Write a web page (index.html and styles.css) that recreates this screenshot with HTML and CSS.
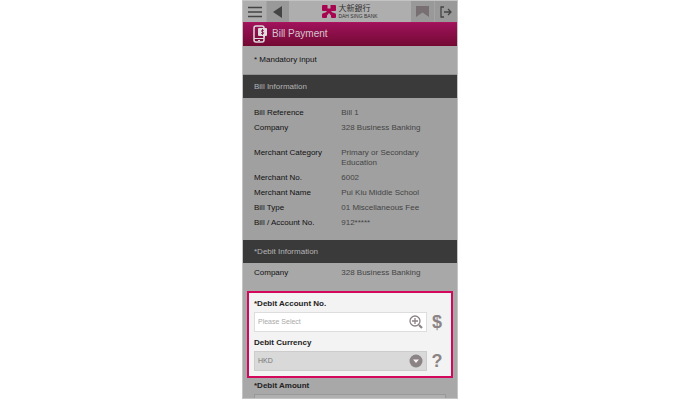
FILE: index.html
```html
<!DOCTYPE html>
<html lang="en">
<head>
    <meta charset="UTF-8">
    <meta name="viewport" content="width=device-width, initial-scale=1.0">
    <title>Bill Payment</title>
    <link rel="stylesheet" href="styles.css">
</head>
<body>

<main class="phone">
    <header class="topbar">
        <button class="bar_button" type="button" aria-label="Menu">
            <svg width="14" height="12" viewBox="0 0 14 12"><path d="M0 1.5h14M0 6h14M0 10.5h14" stroke="#444" stroke-width="1.5"/></svg>
        </button>
        <button class="bar_button shaded" type="button" aria-label="Back">
            <svg width="10" height="12" viewBox="0 0 10 12"><path d="M9 0v12L0 6z" fill="#444"/></svg>
        </button>
        <div class="brand">
            <svg width="14" height="13" viewBox="0 0 14 13">
                <path d="M1 0H5.500V3.500h3V0H13q1 0 1 1V5q0 1-1 1H9Q9.500 7.500 12 8 14 8.300 14 9.500V12Q14 13 13 13H10Q9 13 9 12V10.500L7 8 5 10.500V12Q5 13 4 13H1Q0 13 0 12V9.500Q0 8.300 2 8 4.500 7.500 5 6H1Q0 6 0 5V1Q0 0 1 0z" fill="#a80550"/>
            </svg>
            <div class="brand_text">
                <div class="brand_zh" lang="zh-Hant">大新銀行</div>
                <div class="brand_en">DAH SING BANK</div>
            </div>
        </div>
        <button class="bar_button shaded" type="button" aria-label="Bookmarks">
            <svg width="13" height="11" viewBox="0 0 13 11"><path d="M0 0h13v11L6.500 6.500 0 11z" fill="#776f71"/></svg>
        </button>
        <button class="bar_button shaded" type="button" aria-label="Log out">
            <svg width="12" height="12" viewBox="0 0 12 12" fill="none" stroke="#444" stroke-width="1.300"><path d="M4 1H1v10h3M4 6h7M8 3l3 3-3 3"/></svg>
        </button>
    </header>

    <div class="title">
        <svg width="14" height="18" viewBox="0 0 14 18" fill="none" stroke="#ddd">
            <rect x="1" y="1" width="10" height="16" rx="2" stroke-width="1.500"/>
            <path d="M1 13.500h10M5 15.500h2"/>
            <path d="M6 3h7q1 0 1 1v6q0 1-1 1h-1v2l-2-2H6q-1 0-1-1V4q0-1 1-1z" fill="#ddd" stroke="none"/>
            <path d="M11 5.500Q8.500 4.500 8.200 6 8.500 6.800 9.700 7 11.200 7.500 10.500 8.500 9 9.200 8 8.300M9.500 4v6" stroke="#850443" stroke-width=".8"/>
        </svg>
        <h1>Bill Payment</h1>
    </div>

    <p class="note">* Mandatory input</p>

    <h2 class="section_title">Bill Information</h2>
    <dl class="details">
        <div class="row"><dt>Bill Reference</dt><dd>Bill 1</dd></div>
        <div class="row tall"><dt>Company</dt><dd>328 Business Banking</dd></div>
        <div class="row"><dt>Merchant Category</dt><dd>Primary or Secondary Education</dd></div>
        <div class="row"><dt>Merchant No.</dt><dd>6002</dd></div>
        <div class="row"><dt>Merchant Name</dt><dd>Pui Kiu Middle School</dd></div>
        <div class="row"><dt>Bill Type</dt><dd>01 Miscellaneous Fee</dd></div>
        <div class="row"><dt>Bill / Account No.</dt><dd>912*****</dd></div>
    </dl>

    <h2 class="section_title">*Debit Information</h2>
    <dl class="details compact">
        <div class="row"><dt>Company</dt><dd>328 Business Banking</dd></div>
    </dl>

    <form class="debit">
        <div class="highlight">
            <label for="account">*Debit Account No.</label>
            <div class="field">
                <div class="control">
                    <input id="account" type="text" placeholder="Please Select">
                    <svg width="14" height="14" viewBox="0 0 14 14" fill="none" stroke="#8c8385" stroke-width="1.300"><circle cx="6" cy="6" r="5"/><path d="M3 6h6M6 3v6"/><path d="M10 10l3 3" stroke-width="2.200"/></svg>
                </div>
                <span class="symbol">$</span>
            </div>
            <label for="currency">Debit Currency</label>
            <div class="field">
                <div class="control disabled">
                    <select id="currency"><option>HKD</option></select>
                    <svg width="14" height="14" viewBox="0 0 14 14"><circle cx="7" cy="7" r="6.500" fill="#8c8385"/><path d="M4 5.500h6L7 9z" fill="#f4f4f4"/></svg>
                </div>
                <button class="symbol" type="button" aria-label="Currency help">?</button>
            </div>
        </div>
        <div class="amount">
            <label for="amount">*Debit Amount</label>
            <input id="amount" type="text">
        </div>
    </form>
</main>

</body>
</html>
```
FILE: styles.css
```css
* {
    box-sizing: border-box;
}

body {
    margin: 0;
    background: #fff;
    font-family: "Liberation Sans", Arial, sans-serif;
    font-size: 8px;
    line-height: 10px;
    color: #111;
}

h1, h2, p, dl, dd {
    margin: 0;
    font-weight: normal;
}

svg {
    display: block;
    flex: none;
}

button {
    border: 0;
    padding: 0;
    background: none;
    font: inherit;
}

.phone {
    width: 100%;
    max-width: 216px;
    margin: 0 auto;
    border: 1px solid #c4c4c4;
    background: #a8a8a8;
    overflow: hidden;
}

.topbar {
    display: flex;
    height: 21px;
    background: #aeaeae;
}

.bar_button {
    display: flex;
    align-items: center;
    justify-content: center;
    width: 23px;
}

.bar_button.shaded {
    background: #999;
}

.bar_button + .bar_button {
    border-left: 1px solid #a4a4a4;
}

.brand {
    flex: 1;
    display: flex;
    align-items: center;
    justify-content: center;
    gap: 2px;
}

.brand_text {
    color: #333;
}

.brand_zh {
    font-family: "Liberation Sans", "Noto Sans CJK TC", sans-serif;
    font-size: 8px;
    line-height: 8px;
}

.brand_en {
    font-size: 5px;
    line-height: 6px;
    white-space: nowrap;
}

.title {
    display: flex;
    align-items: center;
    gap: 5px;
    height: 24px;
    padding: 0 10px;
    border-top: 1px solid #ad1460;
    border-bottom: 1px solid #740831;
    background: linear-gradient(#9f125b, #750a35);
    color: #d5c5cc;
}

.title h1 {
    font-size: 10px;
    line-height: 14px;
}

.note {
    padding: 9px 11px 9px;
    border-bottom: 1px solid #919191;
}

.section_title {
    padding: 7px 11px 6px;
    background: #3a3a3a;
    font-size: 8px;
    color: #b4b4b4;
}

.details {
    display: flex;
    flex-direction: column;
    gap: 5px;
    padding: 10px 11px 12px;
    background: #a0a0a0;
}

.details.compact {
    padding: 5px 11px 13px;
    background: #a8a8a8;
}

.row {
    display: grid;
    grid-template-columns: 5fr 6fr;
}

.row.tall {
    min-height: 20px;
}

.row dd {
    padding-right: 10px;
    color: #444;
}

.highlight {
    margin: 0 4px;
    padding: 5px;
    border: 2px solid #d3085c;
    background: #f3f3f3;
}

.debit label {
    display: block;
    padding: 1px 0 3px;
    font-weight: bold;
    color: #222;
}

.field {
    display: flex;
    align-items: center;
    gap: 1px;
}

.field + label {
    padding-top: 6px;
}

.control {
    flex: 1;
    display: flex;
    align-items: center;
    height: 20px;
    padding: 0 3px;
    border: 1px solid #ddd;
    background: #fff;
}

.control input, .control select {
    flex: 1;
    min-width: 0;
    border: 0;
    padding: 0;
    appearance: none;
    background: transparent;
    font: 7px/10px "Liberation Sans", Arial, sans-serif;
    color: #777;
}

.control input::placeholder {
    color: #a8a8a8;
}

.control.disabled {
    border-color: #ccc;
    background: #d9d9d9;
}

.symbol {
    width: 18px;
    font-size: 18px;
    font-weight: bold;
    line-height: 20px;
    text-align: center;
    color: #8c8385;
}

.amount {
    padding: 2px 11px 0;
}

.amount input {
    display: block;
    width: 100%;
    height: 4px;
    padding: 0;
    border: 1px solid #999;
    border-bottom: 0;
    background: #b0b0b0;
}
```
